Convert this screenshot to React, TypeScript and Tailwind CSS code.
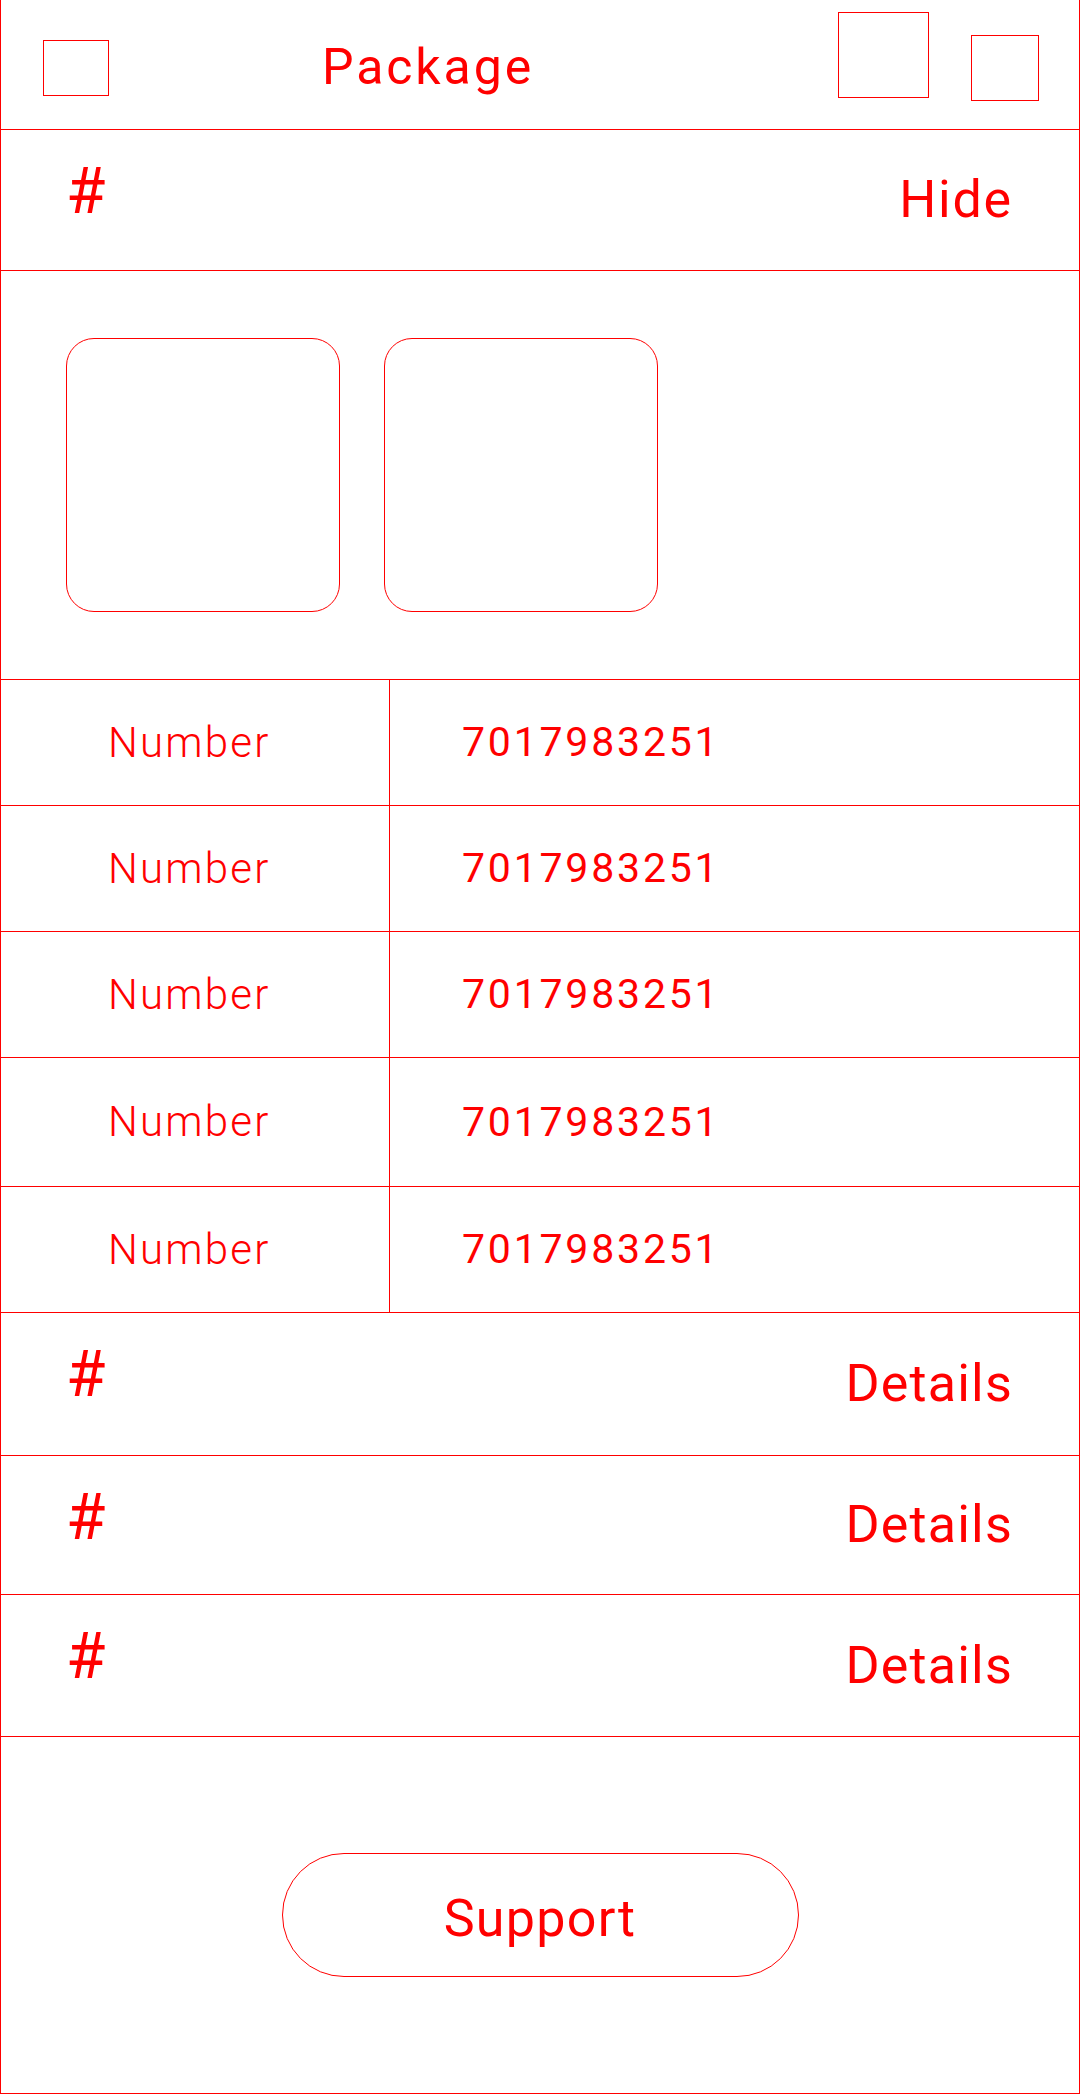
import React from "react";

const font = { fontFamily: 'Roboto, "Liberation Sans", sans-serif' };

function TableRow({ h }: { h: string }) {
  return (
    <div className={`flex border-b border-[#ff0000] ${h}`}>
      <div className="flex w-[389px] items-center border-r border-[#ff0000] pl-[107px]">
        <span className="text-[42px] font-light leading-none tracking-[2.2px] text-[#ff0000]">Number</span>
      </div>
      <div className="flex flex-1 items-center pl-[72px]">
        <span className="text-[41px] font-normal leading-none tracking-[2.8px] text-[#ff0000]">7017983251</span>
      </div>
    </div>
  );
}

function HashRow({ label, h, track }: { label: string; h: string; track: string }) {
  return (
    <div className={`flex items-center justify-between border-b border-[#ff0000] pl-[65px] pr-[66px] ${h}`}>
      <span className="self-start pt-[30px] text-[64px] leading-none text-[#ff0000]">#</span>
      <span className={`text-[52px] leading-none text-[#ff0000] ${track}`}>{label}</span>
    </div>
  );
}

export default function App() {
  return (
    <div className="min-h-[2094px] w-[1080px] bg-white" style={font}>
      <div className="flex h-[2094px] flex-col border-x border-b border-[#ff0000]">
        {/* Header */}
        <div className="flex h-[130px] shrink-0 items-start border-b border-[#ff0000]">
          <div className="ml-[42px] mt-[40px] h-[56px] w-[66px] border border-[#ff0000]" />
          <span className="ml-[213px] mt-[4px] self-center text-[50px] leading-none tracking-[2.9px] text-[#ff0000]">Package</span>
          <div className="ml-auto mt-[12px] h-[86px] w-[91px] border border-[#ff0000]" />
          <div className="ml-[42px] mr-[40px] mt-[35px] h-[66px] w-[68px] border border-[#ff0000]" />
        </div>

        <HashRow label="Hide" h="h-[141px]" track="tracking-[1.8px]" />

        {/* Images */}
        <div className="flex h-[409px] shrink-0 items-start gap-[44px] border-b border-[#ff0000] pl-[65px] pt-[67px]">
          <div className="h-[274px] w-[274px] rounded-[28px] border border-[#ff0000]" />
          <div className="h-[274px] w-[274px] rounded-[28px] border border-[#ff0000]" />
        </div>

        <TableRow h="h-[126px]" />
        <TableRow h="h-[126px]" />
        <TableRow h="h-[126px]" />
        <TableRow h="h-[129px]" />
        <TableRow h="h-[126px]" />

        <HashRow label="Details" h="h-[143px]" track="tracking-[1.2px]" />
        <HashRow label="Details" h="h-[139px]" track="tracking-[1.2px]" />
        <HashRow label="Details" h="h-[142px]" track="tracking-[1.2px]" />

        {/* Support */}
        <div className="flex flex-1 items-center justify-center">
          <div className="flex h-[124px] w-[517px] items-center justify-center rounded-full border border-[#ff0000]">
            <span className="mt-[8px] text-[52px] leading-none tracking-[1.3px] text-[#ff0000]">Support</span>
          </div>
        </div>
      </div>
    </div>
  );
}
